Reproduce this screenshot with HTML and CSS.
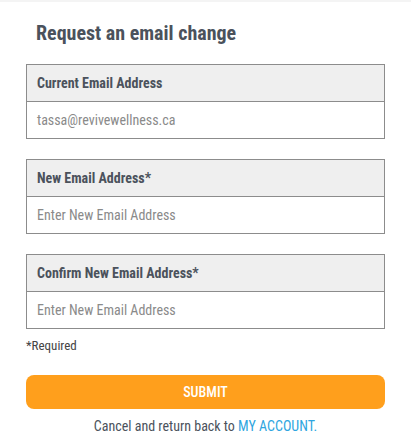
FILE: index.html
```html
<!DOCTYPE html>
<html>
<head>
<meta charset="utf-8">
<link rel="stylesheet" href="styles.css">
</head>
<body>
<div class="topline"></div>
<main class="page">
  <h1 class="title">Request an email change</h1>
  <form class="form">
    <div class="field">
      <div class="label">Current Email Address</div>
      <div class="value">tassa@revivewellness.ca</div>
    </div>
    <div class="field">
      <div class="label">New Email Address*</div>
      <div class="value placeholder">Enter New Email Address</div>
    </div>
    <div class="field">
      <div class="label">Confirm New Email Address*</div>
      <div class="value placeholder">Enter New Email Address</div>
    </div>
    <div class="required">*Required</div>
    <button type="button" class="submit">SUBMIT</button>
    <p class="cancel">Cancel and return back to <a class="link" href="#">MY ACCOUNT.</a></p>
  </form>
</main>
</body>
</html>
```
FILE: styles.css
```css
html, body {
  margin: 0;
  padding: 0;
  background: #fff;
}
body {
  font-family: Roboto, "Liberation Sans", sans-serif;
  font-stretch: 87.5%;
  color: #4b525c;
}
.topline {
  height: 2px;
  background: #f4f4f4;
}
.page {
  padding: 0 26px;
}
.title {
  margin: 0;
  padding: 19px 0 0 10px;
  height: 43px;
  box-sizing: border-box;
  font-size: 20px;
  font-weight: 700;
  line-height: 24px;
  color: #4b525c;
}
.form {
  margin-top: 19px;
  display: flex;
  flex-direction: column;
}
.field {
  border: 1px solid #8c8c8c;
  margin-bottom: 20px;
}
.label {
  background: #efefef;
  height: 36px;
  border-bottom: 1px solid #8c8c8c;
  padding-left: 10px;
  display: flex;
  align-items: center;
  font-size: 14px;
  font-weight: 700;
  color: #4b525c;
}
.value {
  height: 36px;
  padding-left: 10px;
  display: flex;
  align-items: center;
  font-size: 14px;
  color: #8a8a8a;
}
.required {
  margin-top: -12px;
  font-size: 13px;
  color: #444;
  line-height: 18px;
}
.submit {
  margin-top: 20px;
  height: 34px;
  border: none;
  border-radius: 8px;
  background: #ff9f1c;
  color: #fff;
  font-family: inherit;
  font-stretch: inherit;
  font-size: 14px;
  font-weight: 500;
}
.cancel {
  margin: 9px 0 0;
  text-align: center;
  font-size: 14px;
  color: #4b525c;
}
.link {
  color: #2ea5e0;
  text-decoration: none;
}
```
